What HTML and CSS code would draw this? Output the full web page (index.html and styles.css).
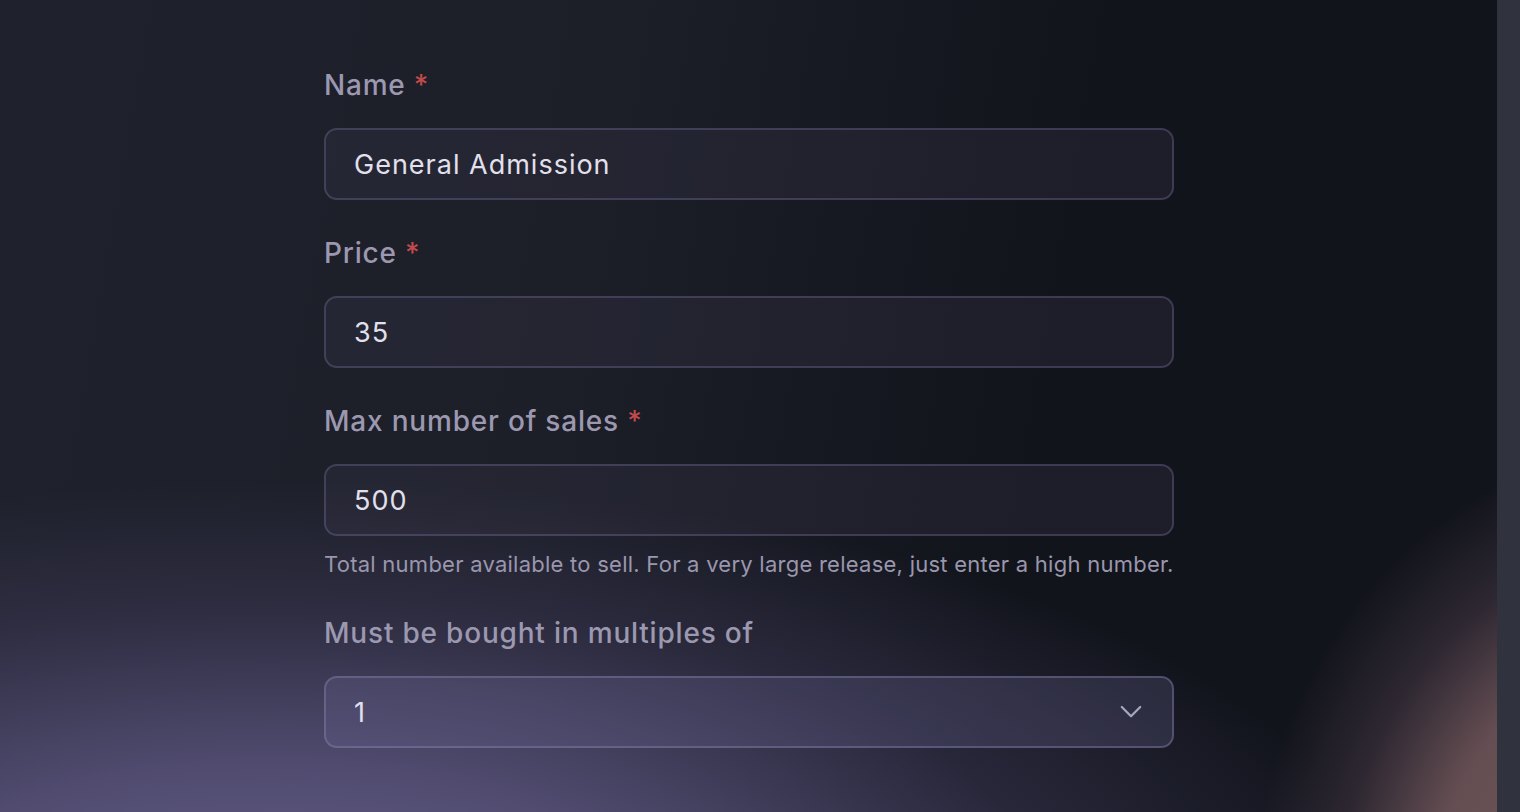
FILE: index.html
```html
<!DOCTYPE html>
<html lang="en">
<head>
<meta charset="utf-8">
<title>Ticket form</title>
<link rel="stylesheet" href="styles.css">
</head>
<body>
<div class="page">
  <main class="canvas">
    <form class="form">
      <div class="field">
        <label class="label">Name <span class="req">*</span></label>
        <div class="input">General Admission</div>
      </div>
      <div class="field">
        <label class="label">Price <span class="req">*</span></label>
        <div class="input">35</div>
      </div>
      <div class="field">
        <label class="label">Max number of sales <span class="req">*</span></label>
        <div class="input">500</div>
        <p class="help">Total number available to sell. For a very large release, just enter a high number.</p>
      </div>
      <div class="field">
        <label class="label">Must be bought in multiples of</label>
        <div class="input select">
          <span>1</span>
          <svg class="chev" width="22" height="14" viewBox="0 0 22 14"><path d="M1.8 2 L11 11.2 L20.2 2" fill="none" stroke="#aaa6c0" stroke-width="2.2" stroke-linecap="round" stroke-linejoin="round"/></svg>
        </div>
      </div>
    </form>
  </main>
  <div class="scrollbar"></div>
</div>
</body>
</html>
```
FILE: styles.css
```css
html, body {
  margin: 0;
  padding: 0;
  height: 100%;
}
body {
  font-family: Inter, "Noto Sans", "Liberation Sans", sans-serif;
  background: #11131b;
}
.page {
  display: flex;
  height: 812px;
  overflow: hidden;
}
.canvas {
  flex: 1;
  background:
    radial-gradient(ellipse 430px 480px at 1680px 920px, rgba(125, 95, 95, 0.95) 0%, rgba(112, 86, 90, 0.88) 58%, rgba(72, 58, 70, 0.5) 80%, rgba(17, 19, 27, 0) 100%),
    radial-gradient(ellipse 1100px 430px at 280px 910px, rgba(100, 92, 135, 1) 0%, rgba(88, 82, 122, 0.85) 35%, rgba(62, 58, 88, 0.5) 70%, rgba(40, 40, 60, 0) 100%),
    linear-gradient(100deg, #1f212c 0%, #1c1e28 38%, #12141c 68%, #12141c 100%);
  padding-top: 65px;
  padding-left: 324px;
}
.form {
  width: 850px;
  display: flex;
  flex-direction: column;
  gap: 33px;
}
.field {
  display: flex;
  flex-direction: column;
}
.label {
  font-size: 28px;
  line-height: 40px;
  font-weight: 500;
  color: #9c98b0;
  margin-bottom: 23px;
  letter-spacing: 0.8px;
}
.req {
  color: #c24a4c;
}
.input {
  box-sizing: border-box;
  height: 72px;
  border: 2px solid rgba(120, 116, 160, 0.35);
  border-radius: 13px;
  background: rgba(60, 58, 80, 0.28);
  padding: 0 28px;
  display: flex;
  align-items: center;
  font-size: 27px;
  letter-spacing: 1px;
  color: #e2e0ec;
}
.select {
  justify-content: space-between;
  background: rgba(110, 104, 150, 0.26);
  border-color: rgba(140, 134, 180, 0.4);
  padding-right: 30px;
}
.chev {
  display: block;
}
.help {
  margin: 12px 0 0;
  font-size: 22px;
  line-height: 32px;
  letter-spacing: 0.25px;
  color: #9a97ad;
  white-space: nowrap;
}
.scrollbar {
  width: 23px;
  flex: none;
  background: #30323d;
}
```
